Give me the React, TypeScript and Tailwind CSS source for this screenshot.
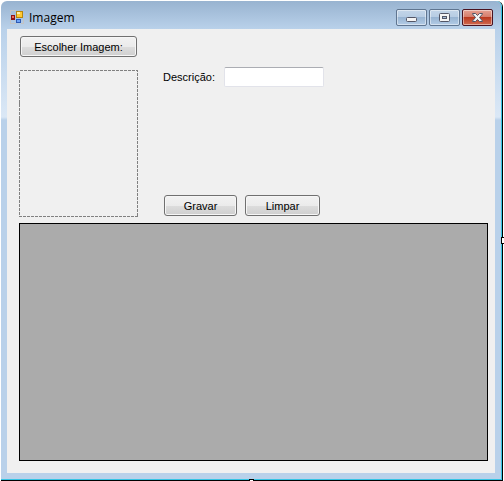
import React from "react";

const captionButton =
  "flex h-[17px] w-[31px] items-center justify-center rounded-xs border shadow-[inset_0_0_0_1px_rgba(255,255,255,0.45)]";
const blueCaption =
  "border-[#5f7590] bg-[linear-gradient(#c3d5e8_0%,#b6cce3_48%,#98b4d2_50%,#b3cce6_100%)]";

function AppIcon() {
  return (
    <svg className="mt-1" width="14" height="14" viewBox="0 0 14 14" shapeRendering="crispEdges" aria-hidden="true">
      <path d="M0.5 3.5V0.5H6M0.5 9V13.5H6M13.5 9V13.5H11" fill="none" stroke="#c3c3c3" />
      <rect x="6" y="1" width="7" height="7" fill="#b8860b" />
      <rect x="7" y="2" width="5" height="5" fill="#ffc933" />
      <rect x="7" y="2" width="3" height="2" fill="#fff0a8" />
      <rect x="1" y="5" width="4" height="5" fill="#8f1515" />
      <rect x="2" y="6" width="2" height="2" fill="#ef6b55" />
      <rect x="6" y="9" width="5" height="4" fill="#2c59b4" />
      <rect x="7" y="10" width="3" height="2" fill="#6da2f5" />
    </svg>
  );
}

function TitleBar() {
  return (
    <header className="flex h-7 items-center pr-[2px] pl-[3px]">
      <AppIcon />
      <h1 className="ml-[5px] flex-1 pt-[5px] font-['Open_Sans',sans-serif] text-xs leading-4 text-black">
        Imagem
      </h1>
      <div className="flex gap-[2px] pt-[5px]">
        <button type="button" aria-label="Minimizar" className={`${captionButton} ${blueCaption}`}>
          <svg width="11" height="9" viewBox="0 0 11 9" aria-hidden="true">
            <rect x="0.5" y="4.5" width="10" height="4" rx="1" fill="#f4f4f4" stroke="#535666" />
          </svg>
        </button>
        <button type="button" aria-label="Maximizar" className={`${captionButton} ${blueCaption}`}>
          <svg width="11" height="9" viewBox="0 0 11 9" aria-hidden="true">
            <rect x="0.5" y="0.5" width="10" height="8" rx="1" fill="#f4f4f4" stroke="#535666" />
            <rect x="3.5" y="3.5" width="4" height="2" fill="#a5bdd8" stroke="#535666" />
          </svg>
        </button>
        <button
          type="button"
          aria-label="Fechar"
          className={`${captionButton} border-[#4a1220] bg-[linear-gradient(#e5a193_0%,#d57b69_48%,#bb3a20_50%,#d06a50_100%)]`}
        >
          <svg width="13" height="11" viewBox="0 0 13 11" aria-hidden="true">
            <path
              d="M1.5 1.5H4.5L6.5 3.5L8.5 1.5H11.5V2L8.5 5.5L11.5 9V9.5H8.5L6.5 7.5L4.5 9.5H1.5V9L4.5 5.5L1.5 2Z"
              fill="#f4f4f4"
              stroke="#535666"
            />
          </svg>
        </button>
      </div>
    </header>
  );
}

function FormButton({ children, className }: { children: React.ReactNode; className: string }) {
  return (
    <button
      type="button"
      className={`h-[21px] rounded-[3px] border border-[#707070] bg-[linear-gradient(#f2f2f2_0%,#ebebeb_50%,#dddddd_51%,#cfcfcf_100%)] text-[11px] leading-4 text-black shadow-[inset_0_0_0_1px_#f6f6f6] ${className}`}
    >
      {children}
    </button>
  );
}

export default function App() {
  return (
    <div className="relative flex min-h-screen flex-col bg-white pt-px pr-px pl-px font-['Liberation_Sans',Arial,sans-serif]">
      <div className="flex flex-1 flex-col rounded-t-md border-r border-b border-black">
        <div className="flex flex-1 flex-col rounded-t-md border-r border-b border-[#35c4e4] bg-[linear-gradient(#98b3d0_0,#b9d1ea_28px,#dbe8f6_116px,#b9d1ea_119px)] px-[6px] pb-[6px]">
          <TitleBar />
          <main className="flex flex-1 flex-col bg-[#f0f0f0] pt-[7px] pr-[7px] pb-3 pl-3">
            <div className="flex gap-[25px]">
              <div className="flex flex-col items-center gap-[13px]">
                <FormButton className="w-[117px]">Escolher Imagem:</FormButton>
                <svg width="119" height="147" role="img" aria-label="Imagem" shapeRendering="crispEdges">
                  <rect
                    x="0.5"
                    y="0.5"
                    width="118"
                    height="146"
                    fill="none"
                    stroke="#808080"
                    strokeDasharray="3 1"
                  />
                </svg>
              </div>
              <div className="flex flex-col justify-between pt-[31px] pb-px">
                <div className="flex items-center">
                  <label htmlFor="descricao" className="w-[61px] text-[11px] leading-4 text-black">
                    Descrição:
                  </label>
                  <input
                    id="descricao"
                    type="text"
                    className="h-5 w-[100px] rounded-xs border border-[#e2e3ea] border-t-[#abadb3] bg-white px-1 text-[11px] outline-none"
                  />
                </div>
                <div className="flex gap-2 pl-px">
                  <FormButton className="w-[73px]">Gravar</FormButton>
                  <FormButton className="w-[75px]">Limpar</FormButton>
                </div>
              </div>
            </div>
            <section aria-label="Registos" className="mt-[6px] flex-1 border border-black bg-[#ababab]" />
          </main>
        </div>
      </div>
      <span className="absolute top-1/2 right-0 -mt-1 h-[7px] w-[3px] border border-r-0 border-black bg-white" />
      <span className="absolute bottom-0 left-1/2 -ml-[3px] h-[2px] w-[5px] border-x border-t border-black bg-white" />
    </div>
  );
}
